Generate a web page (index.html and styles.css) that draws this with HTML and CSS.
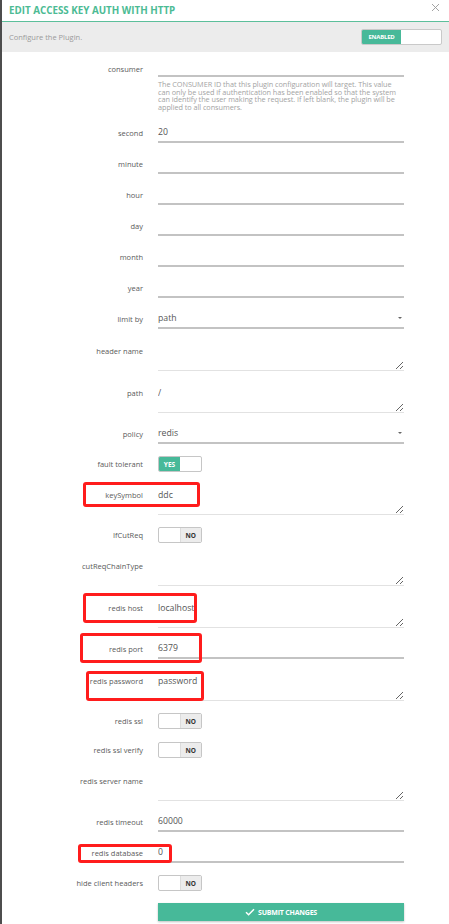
FILE: index.html
```html
<!DOCTYPE html>
<html>
<head>
<meta charset="utf-8">
<link rel="stylesheet" href="styles.css">
</head>
<body>
<div class="page">
  <header class="head">
    <h1 class="title">EDIT ACCESS KEY AUTH WITH HTTP</h1>
    <span class="close"><svg width="9" height="9" viewBox="0 0 9 9"><path d="M1 1L8 8M8 1L1 8" stroke="#9a9a9a" stroke-width="0.9" fill="none"/></svg></span>
  </header>
  <div class="subbar">
    <span class="subtext">Configure the Plugin.</span>
    <div class="bigswitch"><span class="bs-on">ENABLED</span><span class="bs-off"></span></div>
  </div>
  <form class="form">
    <div class="row r-input r-consumer">
      <label class="lbl">consumer</label>
      <div class="field">
        <input class="inp" type="text" value="">
        <p class="help">The CONSUMER ID that this plugin configuration will target. This value can only be used if authentication has been enabled so that the system can identify the user making the request. If left blank, the plugin will be applied to all consumers.</p>
      </div>
    </div>
    <div class="row r-input"><label class="lbl">second</label><input class="inp" type="text" value="20"></div>
    <div class="row r-input"><label class="lbl">minute</label><input class="inp" type="text" value=""></div>
    <div class="row r-input"><label class="lbl">hour</label><input class="inp" type="text" value=""></div>
    <div class="row r-input"><label class="lbl">day</label><input class="inp" type="text" value=""></div>
    <div class="row r-input"><label class="lbl">month</label><input class="inp" type="text" value=""></div>
    <div class="row r-input"><label class="lbl">year</label><input class="inp" type="text" value=""></div>
    <div class="row r-input"><label class="lbl">limit by</label><div class="sel"><span>path</span><i class="caret"></i></div></div>
    <div class="row r-area"><label class="lbl">header name</label><textarea class="ta"></textarea></div>
    <div class="row r-area"><label class="lbl">path</label><textarea class="ta">/</textarea></div>
    <div class="row r-input"><label class="lbl">policy</label><div class="sel"><span>redis</span><i class="caret"></i></div></div>
    <div class="row r-toggle"><label class="lbl">fault tolerant</label><div class="tg"><span class="tg-on">YES</span><span class="tg-blank"></span></div></div>
    <div class="row r-area"><label class="lbl">keySymbol</label><textarea class="ta">ddc</textarea><span class="mark mark-key"></span></div>
    <div class="row r-toggle"><label class="lbl">IfCutReq</label><div class="tg"><span class="tg-blank"></span><span class="tg-off">NO</span></div></div>
    <div class="row r-area"><label class="lbl">cutReqChainType</label><textarea class="ta"></textarea></div>
    <div class="row r-area"><label class="lbl">redis host</label><textarea class="ta">localhost</textarea><span class="mark mark-host"></span></div>
    <div class="row r-input"><label class="lbl">redis port</label><input class="inp" type="text" value="6379"><span class="mark mark-port"></span></div>
    <div class="row r-area"><label class="lbl">redis password</label><textarea class="ta">password</textarea><span class="mark mark-pass"></span></div>
    <div class="row r-toggle"><label class="lbl">redis ssl</label><div class="tg"><span class="tg-blank"></span><span class="tg-off">NO</span></div></div>
    <div class="row r-toggle"><label class="lbl">redis ssl verify</label><div class="tg"><span class="tg-blank"></span><span class="tg-off">NO</span></div></div>
    <div class="row r-area"><label class="lbl">redis server name</label><textarea class="ta"></textarea></div>
    <div class="row r-input"><label class="lbl">redis timeout</label><input class="inp" type="text" value="60000"></div>
    <div class="row r-input"><label class="lbl">redis database</label><input class="inp" type="text" value="0"><span class="mark mark-db"></span></div>
    <div class="row r-toggle"><label class="lbl">hide client headers</label><div class="tg"><span class="tg-blank"></span><span class="tg-off">NO</span></div></div>
    <div class="row r-btn"><span></span><button class="submit" type="button"><svg width="10" height="8" viewBox="0 0 10 8"><path d="M1 4.2L3.6 6.8L9 1.2" stroke="#fff" stroke-width="1.5" fill="none"/></svg>SUBMIT CHANGES</button></div>
  </form>
</div>
</body>
</html>
```

FILE: styles.css
```css
* { box-sizing: border-box; }
html, body { margin: 0; padding: 0; background: #fff; }
body { font-family: "Open Sans", "Liberation Sans", sans-serif; color: #555; }

.page {
  width: 449px;
  height: 924px;
  border-left: 2px solid #4d4d4d;
  overflow: hidden;
}

.head {
  height: 22px;
  border-bottom: 1px solid #5cbf9b;
  display: flex;
  align-items: center;
  justify-content: space-between;
  padding: 0 9px 0 7px;
}
.title {
  margin: 0;
  font-size: 9.8px;
  font-weight: 700;
  color: #4cbb94;
  letter-spacing: 0;
  line-height: 20px;
}
.close { display: flex; margin-top: -6px; }

.subbar {
  height: 30px;
  background: #ececec;
  display: flex;
  align-items: center;
  justify-content: space-between;
  padding: 0 7px 0 7px;
}
.subtext { font-size: 7.5px; color: #9b9b9b; }
.bigswitch {
  width: 81px;
  height: 16px;
  border: 1px solid #c9c9c9;
  border-radius: 2px;
  background: #fff;
  display: flex;
  overflow: hidden;
}
.bs-on {
  width: 39px;
  background: #47b999;
  color: #fff;
  font-size: 6px;
  font-weight: 700;
  display: flex;
  align-items: center;
  justify-content: center;
  letter-spacing: -0.2px;
}
.bs-off { flex: 1; }

.form { padding-top: 5px; }

.row {
  display: grid;
  grid-template-columns: 141px 246px;
  column-gap: 15px;
  margin-bottom: 11px;
  position: relative;
}
.lbl {
  text-align: right;
  font-size: 7.5px;
  color: #5a5a5a;
  white-space: nowrap;
}
.r-input { height: 20px; }
.r-input .lbl { line-height: 20px; }
.r-area { height: 31px; }
.r-area .lbl { line-height: 22px; }
.r-toggle { height: 18px; align-items: center; }
.r-btn { height: 18px; }

.r-consumer { height: auto; margin-bottom: 12px; }
.r-consumer .lbl { line-height: 24px; }

.inp {
  display: block;
  width: 246px;
  height: 20px;
  border: none;
  border-bottom: 2px solid #c3c3c3;
  padding: 0;
  font-family: inherit;
  font-size: 8.7px;
  color: #555;
  outline: none;
  background: transparent;
}
.help {
  margin: 4px 0 0;
  font-size: 7.3px;
  line-height: 7.5px;
  color: #a3a3a3;
  letter-spacing: -0.05px;
  padding-right: 0;
}

.sel {
  height: 20px;
  border-bottom: 2px solid #c3c3c3;
  display: flex;
  align-items: center;
  justify-content: space-between;
  font-size: 8.7px;
  color: #555;
  padding-right: 2px;
}
.caret {
  width: 0;
  height: 0;
  border-left: 2px solid transparent;
  border-right: 2px solid transparent;
  border-top: 2.5px solid #666;
}

.ta {
  display: block;
  width: 246px;
  height: 31px;
  border: none;
  border-bottom: 1px solid #e2e2e2;
  padding: 5px 0 0;
  margin: 0;
  font-family: inherit;
  font-size: 8.7px;
  line-height: 12px;
  color: #555;
  outline: none;
  resize: vertical;
  background: transparent;
}

.tg {
  width: 44px;
  height: 16px;
  border: 1px solid #c6c6c6;
  border-radius: 2px;
  display: flex;
  overflow: hidden;
  background: #fff;
}
.tg > span { width: 21px; display: flex; align-items: center; justify-content: center; font-size: 6.5px; font-weight: 700; }
.tg-on { background: #47b999; color: #fff; }
.tg-off { flex: 1; background: #ececec; color: #333; border-left: 1px solid #dcdcdc; }
.tg-blank { flex: 1; }

.submit {
  grid-column: 2;
  width: 246px;
  height: 18px;
  border: none;
  background: #47b999;
  color: #fff;
  font-family: inherit;
  font-size: 7px;
  font-weight: 700;
  letter-spacing: -0.2px;
  display: flex;
  align-items: center;
  justify-content: center;
  gap: 3px;
  box-shadow: 0 1px 2px rgba(0,0,0,0.25);
  padding: 0;
}

.mark {
  position: absolute;
  border: 3px solid #ff1c1c;
  border-radius: 3px;
  pointer-events: none;
}
.mark-key { left: 81px; top: -2px; width: 117px; height: 25px; }
.mark-host { left: 81px; top: -4px; width: 114px; height: 30px; }
.mark-port { left: 78px; top: -6px; width: 122px; height: 30px; }
.mark-pass { left: 84px; top: 1px; width: 118px; height: 30px; }
.mark-db { left: 76px; top: 1px; width: 94px; height: 19px; }
```
